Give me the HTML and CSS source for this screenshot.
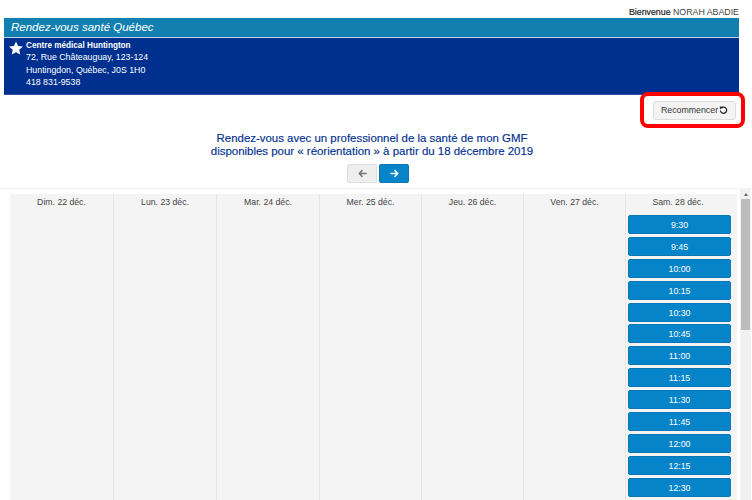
FILE: index.html
```html
<!DOCTYPE html>
<html lang="fr">
<head>
<meta charset="utf-8">
<title>Rendez-vous santé Québec</title>
<link rel="stylesheet" href="styles.css">
</head>
<body>
<div class="welcome"><b>Bienvenue</b> NORAH ABADIE</div>
<header class="banner">
  <div class="brand">Rendez-vous santé Québec</div>
  <div class="clinic">
    <svg class="star" viewBox="0 0 24 24" width="14" height="14"><path fill="#fff" d="M12 .8l3.5 7.6 8.2 1-6.1 5.6 1.7 8.2L12 19.100l-7.300 4.100 1.700-8.200L.3 9.400l8.200-1z"/></svg>
    <div class="address">
      <strong>Centre médical Huntington</strong>
      <div>72, Rue Châteauguay, 123-124</div>
      <div>Huntingdon, Québec, J0S 1H0</div>
      <div>418 831-9538</div>
    </div>
  </div>
</header>
<div class="actions">
  <div class="highlight">
    <button class="restart">Recommencer
      <svg viewBox="0 0 12 12" width="9" height="9"><path fill="none" stroke="#222" stroke-width="1.700" d="M3 2.600A4.200 4.200 0 1 1 1.800 6"/><path fill="#222" d="M.9 .6l4.300.3-3.800 3.800z"/></svg>
    </button>
  </div>
</div>
<h1 class="title">Rendez-vous avec un professionnel de la santé de mon GMF<br>disponibles pour « réorientation » à partir du 18 décembre 2019</h1>
<div class="pager">
  <button class="nav prev"><svg viewBox="0 0 12 12" width="9" height="9"><path fill="none" stroke="#777" stroke-width="2" d="M6 1.500L1.800 6 6 10.500M2 6h9.500"/></svg></button>
  <button class="nav next"><svg viewBox="0 0 12 12" width="9" height="9"><path fill="none" stroke="#fff" stroke-width="2" d="M6 1.500L10.200 6 6 10.500M10 6H.5"/></svg></button>
</div>
<section class="scroller">
  <div class="calendar">
    <div class="day"><div class="dayname">Dim. 22 déc.</div></div>
    <div class="day"><div class="dayname">Lun. 23 déc.</div></div>
    <div class="day"><div class="dayname">Mar. 24 déc.</div></div>
    <div class="day"><div class="dayname">Mer. 25 déc.</div></div>
    <div class="day"><div class="dayname">Jeu. 26 déc.</div></div>
    <div class="day"><div class="dayname">Ven. 27 déc.</div></div>
    <div class="day last">
      <div class="dayname">Sam. 28 déc.</div>
      <div class="slots">
        <a class="slot">9:30</a><a class="slot">9:45</a><a class="slot">10:00</a><a class="slot">10:15</a><a class="slot">10:30</a><a class="slot">10:45</a><a class="slot">11:00</a><a class="slot">11:15</a><a class="slot">11:30</a><a class="slot">11:45</a><a class="slot">12:00</a><a class="slot">12:15</a><a class="slot">12:30</a>
      </div>
    </div>
  </div>
  <div class="scrollbar"><span class="arrow"></span><span class="thumb"></span></div>
</section>
</body>
</html>
```
FILE: styles.css
```css
html, body { margin: 0; height: 500px; overflow: hidden; background: #fff; }
body { font-family: "Liberation Sans", Arial, sans-serif; font-size: 9px; color: #333; }
.welcome { height: 18px; box-sizing: border-box; padding: 7px 13px 0 0; text-align: right; font-size: 8.800px; line-height: 11px; color: #444; }
.welcome b { font-weight: normal; color: #222; -webkit-text-stroke: .2px #222; }
.banner { margin: 0 13px 0 4px; height: 77px; box-sizing: border-box; background: #00308f; border-bottom: 1px solid #2f4fa8; }
.brand { height: 19px; background: #127fb0; border-bottom: 1px solid #b9cfe3; color: #fff; font-size: 11.500px; font-style: italic; line-height: 19px; padding-left: 7px; }
.clinic { display: flex; padding: 1px 0 0 5px; color: #fff; }
.star { margin: 2px 3px 0 0; flex: none; }
.address { font-size: 8.800px; line-height: 12.400px; }
.address strong { display: block; font-size: 8.200px; padding-top: 1px; margin-bottom: -1px; }
.actions { display: flex; justify-content: flex-end; height: 33px; padding-right: 7px; }
.highlight { width: 105px; height: 36px; margin-top: -3px; box-sizing: border-box; border: 4px solid #f00; border-radius: 8px; display: flex; align-items: center; justify-content: flex-end; padding-right: 5px; }
.restart { width: 83px; height: 19px; padding: 0; background: #f4f4f4; border: 1px solid #ddd; border-radius: 3px; font: 8.800px/17px "Liberation Sans", Arial, sans-serif; color: #333; display: flex; align-items: center; justify-content: center; gap: 1px; }
.title { margin: 4px 0 0; padding-right: 8px; text-align: center; font-size: 11.450px; line-height: 13px; font-weight: normal; color: #00308f; -webkit-text-stroke: .15px #00308f; }
.pager { display: flex; justify-content: center; gap: 2px; margin-top: 6px; padding-left: 4px; }
.nav { width: 30px; height: 19px; padding: 0; border-radius: 2px; display: flex; align-items: center; justify-content: center; }
.prev { background: #eee; border: 1px solid #ddd; }
.next { background: #0584ca; border: 1px solid #0d76b1; }
.scroller { display: flex; margin-top: 5px; height: 312px; border-top: 1px solid #f3f3f3; box-sizing: border-box; padding-left: 10px; }
.calendar { display: grid; grid-template-columns: 104px 103px 103px 102px 102px 102px 111px; width: 727px; margin-top: 5px; background: #f4f4f4; }
.day { border-right: 1px solid #e6e6e6; box-sizing: border-box; }
.day.last { border-right: 0; }
.dayname { text-align: center; font-size: 8.700px; line-height: 11px; padding-top: 3px; color: #444; }
.last .dayname { padding-right: 7px; }
.slots { display: flex; flex-direction: column; gap: 2.900px; margin: 7px 6px 0 2px; }
.slot { height: 19px; box-sizing: border-box; background: #0584ca; border: 1px solid #0a78b8; border-radius: 2px; color: #fff; text-align: center; font-size: 8.800px; line-height: 19px; }
.scrollbar { width: 11px; margin-left: 3px; background: #f1f1f1; display: flex; flex-direction: column; align-items: center; }
.arrow { width: 0; height: 0; margin: 4px 0 3px; border: 2.500px solid transparent; border-top: 0; border-bottom: 3px solid #666; }
.thumb { width: 9px; height: 131px; background: #bcbcbc; }
```
